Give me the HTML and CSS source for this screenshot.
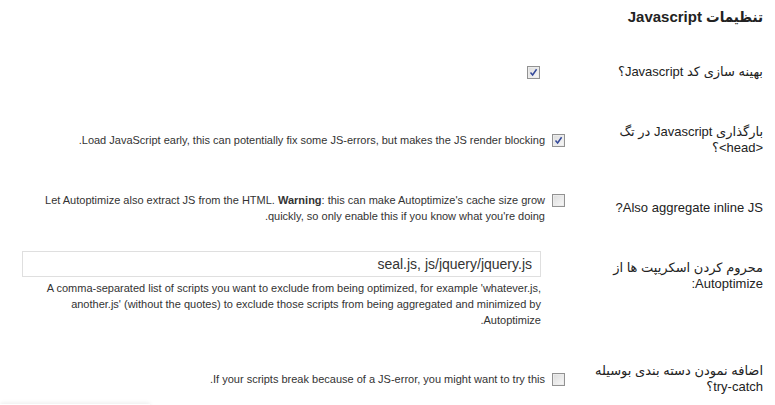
FILE: index.html
```html
<!DOCTYPE html>
<html lang="fa" dir="rtl">
<head>
  <meta charset="UTF-8">
  <title>تنظیمات Javascript</title>
  <link rel="stylesheet" href="styles.css">
</head>
<body>
  <div class="wrap">
    <h3 class="section-title">تنظیمات Javascript</h3>

    <table class="form-table">
      <!-- optimize js -->
      <tr>
        <th>بهینه سازی کد Javascript؟</th>
        <td>
          <span class="cb cb-solo checked"><svg viewBox="0 0 9 9"><path d="M1.5 4.6 L3.6 7 L7.6 1.2" /></svg></span>
        </td>
      </tr>

      <!-- force in head -->
      <tr>
        <th>بارگذاری Javascript در تگ &lt;head&gt;؟</th>
        <td>
          <div class="opt">
            <span class="cb checked"><svg viewBox="0 0 9 9"><path d="M1.5 4.6 L3.6 7 L7.6 1.2" /></svg></span>
            <label class="desc">Load JavaScript early, this can potentially fix some JS-errors, but makes the JS render blocking.</label>
          </div>
        </td>
      </tr>

      <!-- inline js -->
      <tr>
        <th>Also aggregate inline JS?</th>
        <td>
          <div class="opt">
            <span class="cb"></span>
            <label class="desc">Let Autoptimize also extract JS from the HTML. <strong>Warning</strong>: this can make Autoptimize's cache size grow quickly, so only enable this if you know what you're doing.</label>
          </div>
        </td>
      </tr>

      <!-- exclude -->
      <tr>
        <th>محروم کردن اسکریپت ها از Autoptimize:</th>
        <td>
          <div class="field-wide">
            <input type="text" class="text-input" value="seal.js, js/jquery/jquery.js">
            <div class="desc">A comma-separated list of scripts you want to exclude from being optimized, for example 'whatever.js, another.js' (without the quotes) to exclude those scripts from being aggregated and minimized by Autoptimize.</div>
          </div>
        </td>
      </tr>

      <!-- try catch -->
      <tr>
        <th>اضافه نمودن دسته بندی بوسیله try-catch؟</th>
        <td>
          <div class="opt">
            <span class="cb"></span>
            <label class="desc">If your scripts break because of a JS-error, you might want to try this.</label>
          </div>
        </td>
      </tr>
    </table>
  </div>
  <div class="next-shadow"></div>
</body>
</html>
```

FILE: styles.css
```css
body {
  margin: 0;
  background: #fff;
  color: #333;
  font-family: "Liberation Sans", "DejaVu Sans", sans-serif;
  font-size: 13px;
  overflow: hidden;
}
.wrap {
  margin: 0 12px;
}
.section-title {
  margin: 7px 0 15px;
  font-family: "Liberation Sans", "DejaVu Sans Condensed", "DejaVu Sans", sans-serif;
  font-size: 15px;
  line-height: 20px;
  font-weight: bold;
  color: #222;
}
.form-table {
  width: 100%;
  border-collapse: collapse;
}
.form-table th {
  width: 190px;
  padding: 22px 0 22px 0;
  vertical-align: top;
  text-align: right;
  font-weight: normal;
  line-height: 16px;
  color: #222;
}
.form-table td {
  padding: 13px 8px 13px 10px;
  vertical-align: middle;
}
.opt {
  display: flex;
  align-items: flex-start;
  gap: 7px;
}
.desc {
  font-size: 11px;
  line-height: 16px;
  color: #333;
}
.cb {
  flex: none;
  display: block;
  width: 11px;
  height: 11px;
  margin-top: 2px;
  border: 1px solid #929292;
  background: linear-gradient(135deg, #dcdcdc, #f8f8f8);
  box-shadow: inset 0 0 0 1px #ececec;
}
.cb svg {
  display: block;
  width: 9px;
  height: 9px;
  margin: 1px;
}
.cb path {
  fill: none;
  stroke: #33489a;
  stroke-width: 1.5;
}
.cb-solo {
  margin: 0 25px 0 0;
}
.field-wide {
  margin-right: 24px;
}
.text-input {
  display: block;
  box-sizing: border-box;
  width: 100%;
  height: 26px;
  margin: 0 0 3px;
  padding: 0 8px;
  border: 1px solid #dfdfdf;
  font-family: "Liberation Sans", sans-serif;
  font-size: 14px;
  color: #333;
  text-align: right;
}
.next-shadow {
  position: absolute;
  left: 0;
  bottom: -4px;
  width: 150px;
  height: 5px;
  box-shadow: 0 -1px 4px rgba(0, 0, 0, 0.08);
}
```
